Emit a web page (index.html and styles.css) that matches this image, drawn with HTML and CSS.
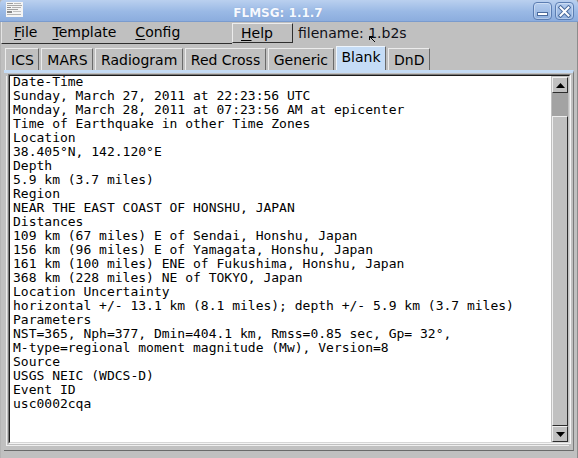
FILE: index.html
```html
<!DOCTYPE html>
<html>
<head>
<meta charset="utf-8">
<title>FLMSG: 1.1.7</title>
<link rel="stylesheet" href="styles.css">
</head>
<body>
<div class="window">
  <header class="titlebar">
    <svg class="app-icon" width="17" height="15" viewBox="0 0 17 15">
      <rect x="0" y="0" width="17" height="15" fill="#f4f4f4"/>
      <rect x="1" y="1" width="6" height="1" fill="#9a9a9a"/>
      <rect x="8" y="1" width="7" height="1" fill="#b8b8b8"/>
      <rect x="1" y="3" width="15" height="1" fill="#a8a8a8"/>
      <rect x="1" y="5" width="4" height="1" fill="#8c8c8c"/>
      <rect x="6" y="5" width="9" height="1" fill="#b0b0b0"/>
      <rect x="1" y="7" width="11" height="1" fill="#a0a0a0"/>
      <rect x="1" y="9" width="5" height="2" fill="#8a8a8a"/>
      <rect x="7" y="9" width="8" height="1" fill="#c0c0c0"/>
      <rect x="1" y="12" width="14" height="1" fill="#b4b4b4"/>
    </svg>
    <div class="title">FLMSG: 1.1.7</div>
    <div class="wm-buttons">
      <span class="wm-btn">
        <svg width="13" height="13" viewBox="0 0 13 13"><rect x="1.5" y="7.5" width="10" height="3" fill="#fff" stroke="#4a6a9c" stroke-width="1"/></svg>
      </span>
      <span class="wm-btn">
        <svg width="13" height="13" viewBox="0 0 13 13"><path d="M2.5 2.5 L10.5 10.5 M10.5 2.5 L2.5 10.5" stroke="#4a6a9c" stroke-width="4" stroke-linecap="square"/><path d="M2.5 2.5 L10.5 10.5 M10.5 2.5 L2.5 10.5" stroke="#fff" stroke-width="2" stroke-linecap="square"/></svg>
      </span>
    </div>
  </header>

  <div class="menurow">
    <nav class="menubar">
      <span class="mi mi-file"><u>F</u>ile</span>
      <span class="mi mi-template"><u>T</u>emplate</span>
      <span class="mi mi-config"><u>C</u>onfig</span>
    </nav>
    <div class="help"><u>H</u>elp</div>
    <span class="filename">filename: 1.b2s</span>
  </div>

  <div class="tabs">
    <span class="tab">ICS</span>
    <span class="tab">MARS</span>
    <span class="tab">Radiogram</span>
    <span class="tab">Red Cross</span>
    <span class="tab">Generic</span>
    <span class="tab tab-active">Blank</span>
    <span class="tab">DnD</span>
  </div>

  <div class="panel">
    <div class="textframe">
      <div class="textframe-inner">
<pre class="text">Date-Time
Sunday, March 27, 2011 at 22:23:56 UTC
Monday, March 28, 2011 at 07:23:56 AM at epicenter
Time of Earthquake in other Time Zones
Location
38.405°N, 142.120°E
Depth
5.9 km (3.7 miles)
Region
NEAR THE EAST COAST OF HONSHU, JAPAN
Distances
109 km (67 miles) E of Sendai, Honshu, Japan
156 km (96 miles) E of Yamagata, Honshu, Japan
161 km (100 miles) ENE of Fukushima, Honshu, Japan
368 km (228 miles) NE of TOKYO, Japan
Location Uncertainty
horizontal +/- 13.1 km (8.1 miles); depth +/- 5.9 km (3.7 miles)
Parameters
NST=365, Nph=377, Dmin=404.1 km, Rmss=0.85 sec, Gp= 32°,
M-type=regional moment magnitude (Mw), Version=8
Source
USGS NEIC (WDCS-D)
Event ID
usc0002cqa</pre>
        <div class="scrollbar">
          <div class="sb-btn">
            <svg width="9" height="5" viewBox="0 0 9 5"><path d="M4.5 0 L9 5 L0 5 Z" fill="#000"/></svg>
          </div>
          <div class="sb-trough"><div class="sb-thumb"></div></div>
          <div class="sb-btn">
            <svg width="9" height="5" viewBox="0 0 9 5"><path d="M0 0 L9 0 L4.5 5 Z" fill="#000"/></svg>
          </div>
        </div>
      </div>
    </div>
  </div>

  <svg class="cursor" width="8" height="8" viewBox="0 0 8 8"><path d="M0.5 0.5 L0.5 4 M0.5 0.5 L4 0.5 M0.5 0.5 L6 6" stroke="#000" stroke-width="1"/></svg>
</div>
</body>
</html>
```

FILE: styles.css
```css
* { box-sizing: border-box; }
html, body { margin: 0; padding: 0; }
body {
  width: 578px;
  height: 458px;
  overflow: hidden;
  background: #c0c0c0;
  font-family: "DejaVu Sans", sans-serif;
  font-size: 14px;
  color: #000;
}
.window {
  position: relative;
  width: 578px;
  height: 458px;
  display: flex;
  flex-direction: column;
  border-right: 1px solid #8c8c8c;
  border-left: 1px solid #b4b4b4;
}

/* title bar */
.titlebar {
  height: 22px;
  flex: none;
  display: flex;
  align-items: center;
  padding: 0 4px 0 6px;
  margin: 0 -1px;
  background: linear-gradient(#bad0ef, #9ab9e5 55%, #8cadde);
  border-bottom: 1px solid #7a9bcd;
  border-radius: 4px 4px 0 0;
}
.app-icon { flex: none; margin-top: -2px; }
.title {
  flex: 1;
  align-self: flex-start;
  text-align: center;
  font-weight: bold;
  font-size: 12px;
  line-height: 14px;
  padding-top: 6px;
  color: #f6f9ff;
  text-shadow: 0 0 1px rgba(70, 100, 150, 0.35);
}
.wm-buttons { display: flex; gap: 3px; margin-top: 1px; }
.wm-btn {
  width: 19px;
  height: 18px;
  border: 1px solid #5b7db2;
  border-radius: 4px;
  background: linear-gradient(#b4ccee, #8fb0df);
  box-shadow: inset 0 0 0 1px rgba(255, 255, 255, 0.35);
  display: flex;
  align-items: center;
  justify-content: center;
}

/* menu row */
.menurow {
  height: 22px;
  flex: none;
  display: flex;
  align-items: flex-start;
}
.menubar {
  width: 231px;
  height: 22px;
  display: flex;
  line-height: 21px;
  border-bottom: 1px solid #2e2e2e;
  border-left: 1px solid #e4e4e4;
}
.mi u, .help u { text-decoration-thickness: 1px; text-underline-offset: 2px; }
.mi-file { margin-left: 12px; }
.mi-template { margin-left: 15px; }
.mi-config { margin-left: 19px; }
.help {
  width: 61px;
  height: 20px;
  margin-top: 1px;
  padding-left: 8px;
  line-height: 18px;
  border: 1px solid;
  border-color: #ececec #2e2e2e #2e2e2e #ececec;
}
.filename {
  margin-left: 5px;
  line-height: 22px;
  color: #101018;
}

/* tabs */
.tabs {
  height: 26px;
  flex: none;
  display: flex;
  align-items: flex-end;
  gap: 2px;
  padding-left: 4px;
}
.tab {
  padding: 1px 4.5px 0 5px;
  line-height: 20px;
  border-top: 1px solid #ececec;
  border-left: 1px solid #ececec;
  border-right: 1px solid #6a6a6a;
  background: #c0c0c0;
}
.tab-active {
  padding: 0 4.5px 2px 5px;
  line-height: 21px;
  background: #c5dcf6;
  border-top-color: #eef5fd;
  border-left-color: #eef5fd;
}

/* panel */
.panel {
  flex: 1;
  margin: 0 3px 7px 3px;
  padding: 1px 2px 0 4px;
  border-top: 3px solid #c5dcf6;
  border-right: 1px solid #7a7a7a;
  border-bottom: 1px solid #6a6a6a;
  display: flex;
  flex-direction: column;
}
.textframe {
  height: 370px;
  flex: none;
  border: 1px solid;
  border-color: #7a7a7a #f4f4f4 #f4f4f4 #7a7a7a;
  box-shadow: -1px 1px 0 0 #c0c0c0, -2px 2px 0 0 #eeeeee;
}
.textframe-inner {
  height: 100%;
  display: flex;
  background: #fff;
  border: 1px solid;
  border-color: #1c1c1c #d6d6d6 #d6d6d6 #1c1c1c;
}
.text {
  flex: 1;
  margin: -1px 0 0;
  padding: 0 0 0 3px;
  font-family: "DejaVu Sans Mono", monospace;
  font-size: 13px;
  line-height: 14px;
  color: #000;
  overflow: hidden;
}
.scrollbar {
  width: 18px;
  flex: none;
  display: flex;
  flex-direction: column;
  background: #c0c0c0;
  padding: 1px 1px 0 1px;
}
.sb-btn {
  height: 16px;
  flex: none;
  display: flex;
  align-items: center;
  justify-content: center;
  background: #c0c0c0;
  border: 1px solid;
  border-color: #eeeeee #2c2c2c #2c2c2c #eeeeee;
}
.sb-trough {
  flex: 1;
  display: flex;
  flex-direction: column;
  padding-top: 23px;
  background: #a3a3a3;
}
.sb-thumb {
  flex: 1;
  background: #c0c0c0;
  border: 1px solid;
  border-color: #eeeeee #2c2c2c #2c2c2c #eeeeee;
}

.cursor {
  position: absolute;
  left: 368px;
  top: 36px;
}
```
